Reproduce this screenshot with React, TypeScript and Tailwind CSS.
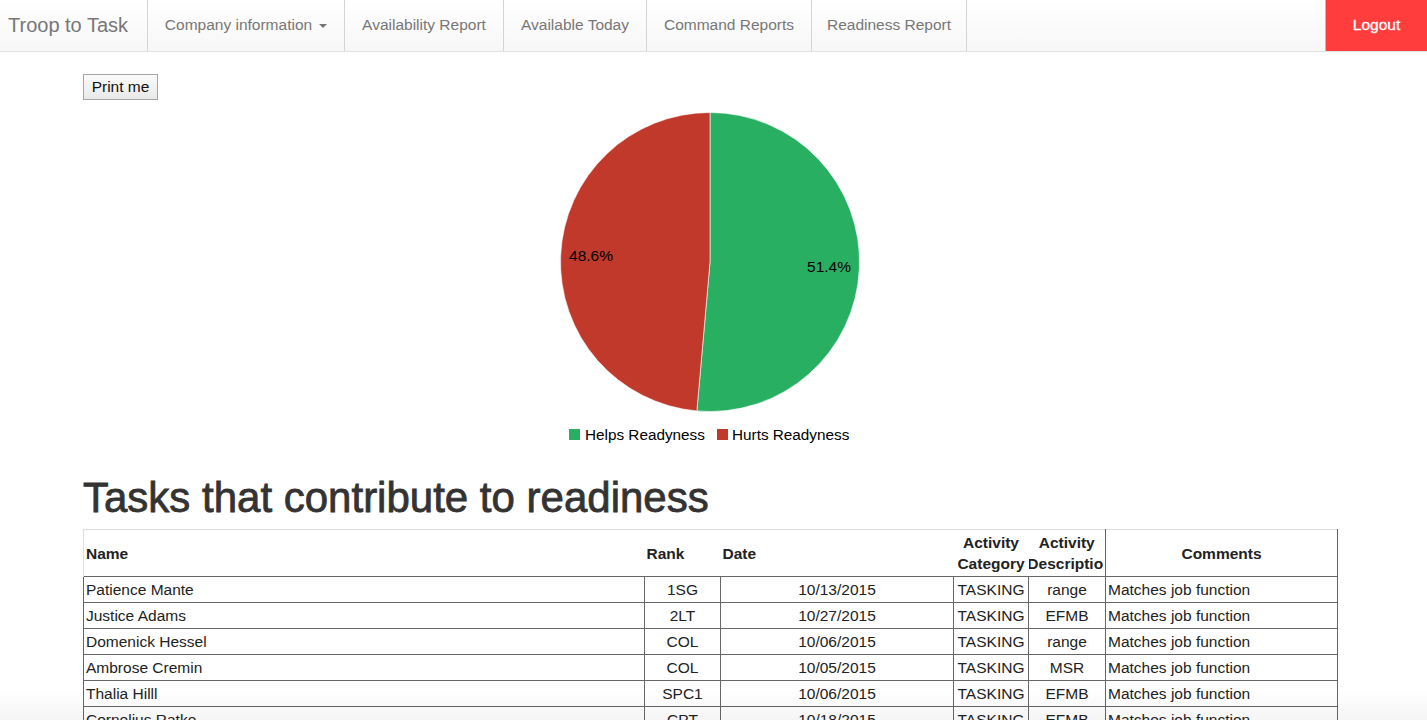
import React from "react";

const rows = [
  ["Patience Mante", "1SG", "10/13/2015", "TASKING", "range", "Matches job function"],
  ["Justice Adams", "2LT", "10/27/2015", "TASKING", "EFMB", "Matches job function"],
  ["Domenick Hessel", "COL", "10/06/2015", "TASKING", "range", "Matches job function"],
  ["Ambrose Cremin", "COL", "10/05/2015", "TASKING", "MSR", "Matches job function"],
  ["Thalia Hilll", "SPC1", "10/06/2015", "TASKING", "EFMB", "Matches job function"],
  ["Cornelius Ratke", "CPT", "10/18/2015", "TASKING", "EFMB", "Matches job function"],
  ["Mireya Kunze", "SGT", "10/21/2015", "TASKING", "range", "Matches job function"],
];

function Pie() {
  const cx = 200;
  const cy = 162;
  const r = 149.5;
  const frac = 0.514;
  const a = frac * 2 * Math.PI;
  const ex = cx + r * Math.sin(a);
  const ey = cy - r * Math.cos(a);
  const green = `M ${cx} ${cy} L ${cx} ${cy - r} A ${r} ${r} 0 1 1 ${ex} ${ey} Z`;
  const red = `M ${cx} ${cy} L ${ex} ${ey} A ${r} ${r} 0 0 1 ${cx} ${cy - r} Z`;
  return (
    <svg width="400" height="350" viewBox="0 0 400 350" className="block">
      <path d={green} fill="#29af62" stroke="#ffffff" strokeWidth="0.6" />
      <path d={red} fill="#c0392b" stroke="#ffffff" strokeWidth="0.6" />
      <text x="319" y="172" textAnchor="middle" fontSize="15.5" fill="#000" fontFamily="'Liberation Sans', Arial, sans-serif">51.4%</text>
      <text x="81" y="161" textAnchor="middle" fontSize="15.5" fill="#000" fontFamily="'Liberation Sans', Arial, sans-serif">48.6%</text>
      <rect x="59" y="329" width="11" height="11" fill="#29af62" />
      <text x="75" y="339.5" fontSize="15.3" fill="#000" fontFamily="'Liberation Sans', Arial, sans-serif">Helps Readyness</text>
      <rect x="207" y="329" width="11" height="11" fill="#c0392b" />
      <text x="222" y="339.5" fontSize="15.3" fill="#000" fontFamily="'Liberation Sans', Arial, sans-serif">Hurts Readyness</text>
    </svg>
  );
}

export default function App() {
  const navItems: { label: string; w: string; caret?: boolean }[] = [
    { label: "Company information", w: "w-[197px]", caret: true },
    { label: "Availability Report", w: "w-[159px]" },
    { label: "Available Today", w: "w-[143px]" },
    { label: "Command Reports", w: "w-[165px]" },
    { label: "Readiness Report", w: "w-[156px]" },
  ];
  return (
    <div className="min-h-screen bg-white font-['Liberation_Sans',Arial,sans-serif] text-[#333]">
      <nav className="flex h-[52px] border-b border-[#e2e2e2] bg-linear-to-b from-white to-[#f7f7f7]">
        <div className="flex w-[147px] items-center pb-[2px] pl-[8px] text-[20px] text-[#777]">Troop to Task</div>
        <ul className="flex">
          {navItems.map((it, i) => (
            <li
              key={it.label}
              className={`flex ${it.w} items-center justify-center border-l border-[#d4d4d4] pb-[2px] text-[15.5px] text-[#777] ${
                i === navItems.length - 1 ? "border-r" : ""
              }`}
            >
              {it.label}
              {it.caret && (
                <span className="ml-[7px] mt-[2px] inline-block h-0 w-0 border-x-[4px] border-t-[4px] border-x-transparent border-t-[#777]" />
              )}
            </li>
          ))}
        </ul>
        <div className="ml-auto flex w-[102px] items-center justify-center border-l border-[#bbb] bg-[#ff3d3d] pb-[2px] text-[15.5px] text-white [-webkit-text-stroke:0.3px_#fff]">
          Logout
        </div>
      </nav>

      <div className="ml-[83px] w-[1254px]">
        <button className="mt-[22px] h-[26px] w-[75px] border border-[#a6a6a6] bg-linear-to-b from-[#fafafa] to-[#e9e9e9] text-[15.5px] text-[#111]">
          Print me
        </button>
        <div className="flex justify-center">
          <Pie />
        </div>
        <h1 className="mt-[25px] mb-[9px] text-[42px] leading-[45px] text-[#333] [-webkit-text-stroke:0.8px_#333]">
          Tasks that contribute to readiness
        </h1>
        <table className="w-[1254px] table-fixed border-collapse text-[15.5px] text-[#222]">
          <colgroup>
            <col className="w-[561px]" />
            <col className="w-[76px]" />
            <col className="w-[233px]" />
            <col className="w-[75px]" />
            <col className="w-[77px]" />
            <col className="w-[232px]" />
          </colgroup>
          <thead>
            <tr className="h-[47px] border-t border-[#ddd] border-b border-b-[#666] text-[15.5px] leading-[21px]">
              <th className="border-l border-[#ddd] px-[2px] py-0 text-left font-bold">Name</th>
              <th className="px-[2px] py-0 text-left font-bold">Rank</th>
              <th className="px-[2px] py-0 text-left font-bold">Date</th>
              <th className="px-0 py-0 text-center font-bold">
                <div className="overflow-hidden whitespace-nowrap">
                  Activity
                  <br />
                  Category
                </div>
              </th>
              <th className="px-0 py-0 text-center font-bold">
                <div className="overflow-hidden whitespace-nowrap">
                  Activity
                  <br />
                  <span className="-ml-[3px] inline-block">Descriptio</span>
                </div>
              </th>
              <th className="border-x border-[#666] py-0 text-center font-bold">Comments</th>
            </tr>
          </thead>
          <tbody>
            {rows.map((r) => (
              <tr key={r[0]} className="leading-[25px]">
                <td className="border border-[#666] px-[2px] py-0 text-left">{r[0]}</td>
                <td className="border border-[#666] px-[2px] py-0 text-center">{r[1]}</td>
                <td className="border border-[#666] px-[2px] py-0 text-center">{r[2]}</td>
                <td className="overflow-hidden whitespace-nowrap border border-[#666] px-[2px] py-0 text-center">{r[3]}</td>
                <td className="border border-[#666] px-[2px] py-0 text-center">{r[4]}</td>
                <td className="border border-[#666] px-[2px] py-0 text-left">{r[5]}</td>
              </tr>
            ))}
          </tbody>
        </table>
      </div>
      <div className="pointer-events-none fixed inset-x-0 bottom-0 h-[30px] bg-linear-to-t from-black/[0.04] to-transparent" />
    </div>
  );
}
